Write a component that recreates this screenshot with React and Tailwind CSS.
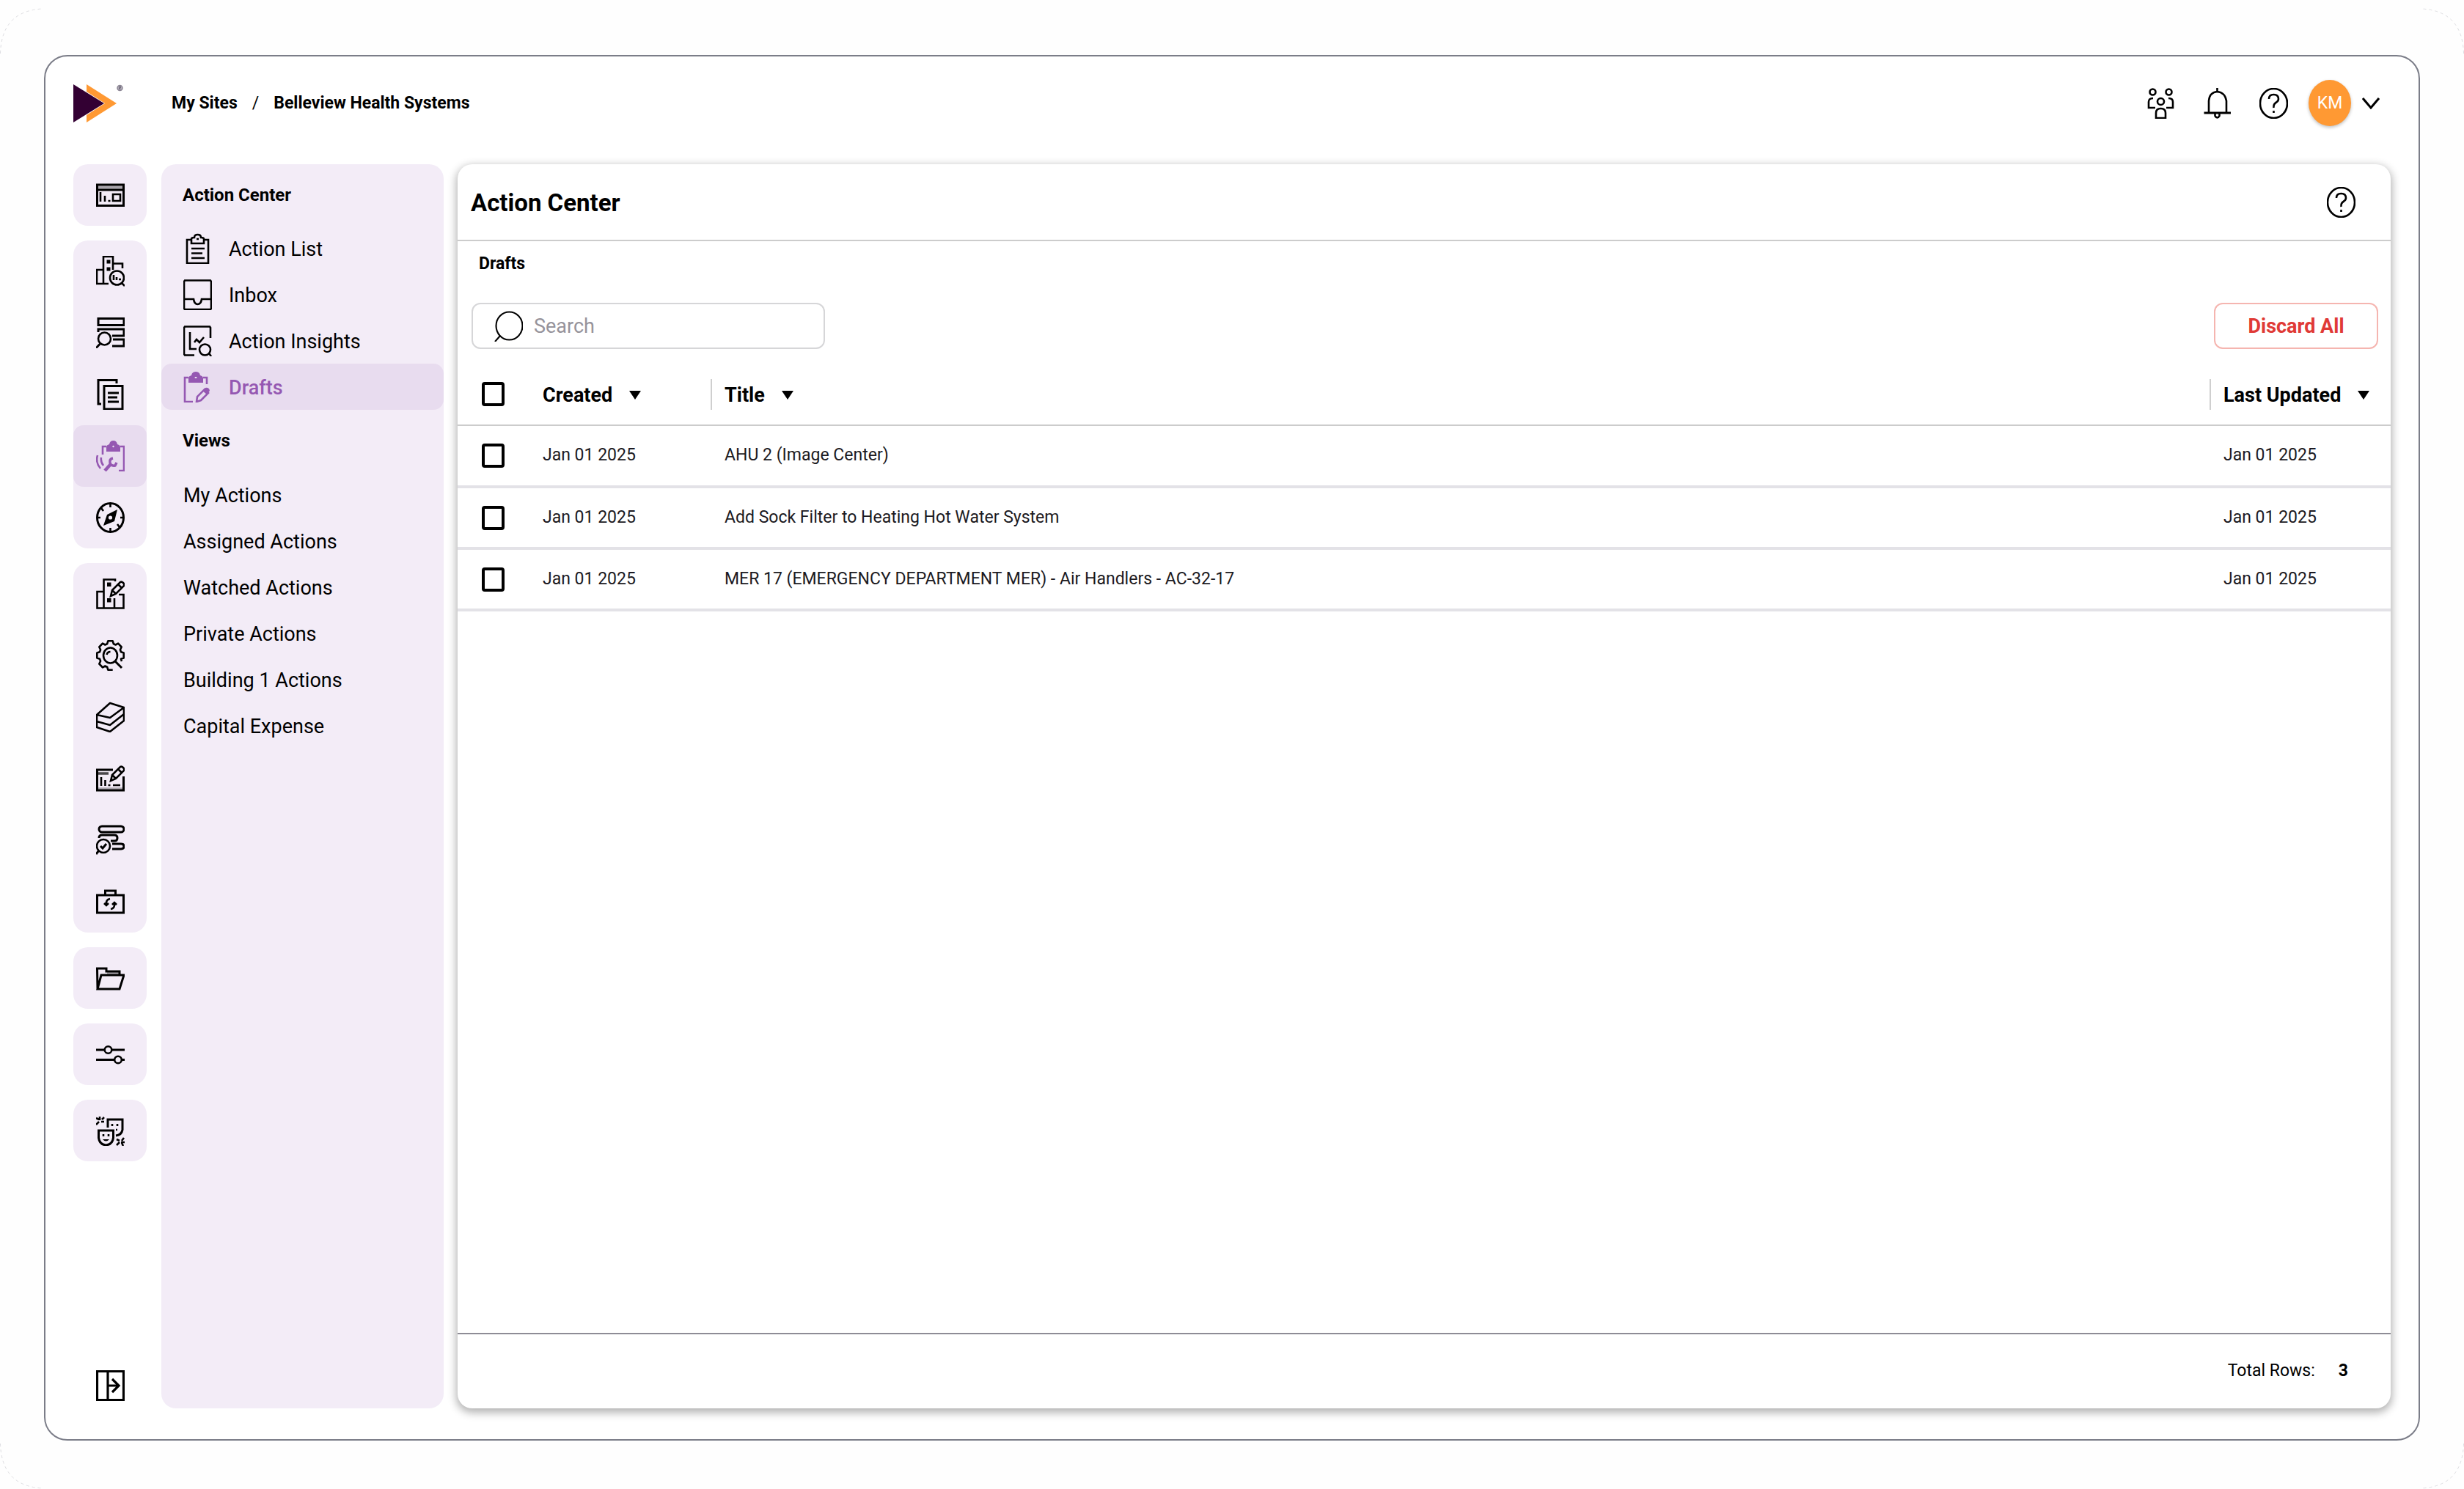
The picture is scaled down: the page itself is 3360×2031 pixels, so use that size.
import { useState } from "react";

// 8 lobed gear, left open where the magnifier handle leaves it
const gearPath = (() => {
  const pts = [];
  for (let i = 0; i < 8; i++) {
    const a = i * 45 + 90;
    [[-17, 0.82], [-10, 1], [10, 1], [17, 0.82]].forEach(([d, r]) => {
      const rad = ((a + d) * Math.PI) / 180;
      pts.push(`${(19.5 + 18.5 * r * Math.cos(rad)).toFixed(1)} ${(21 + 20 * r * Math.sin(rad)).toFixed(1)}`);
    });
  }
  // drop the lobe at the lower right
  return `M${pts.slice(1, 28).join("L")}L35 29`;
})();

const Icon = ({ children, bold }) => (
  <svg
    viewBox="0 0 39 42"
    className="w-[39px] h-[42px] shrink-0"
    fill="none"
    stroke="currentColor"
    strokeWidth={bold ? 2.6 : 2.1}
    aria-hidden="true"
  >
    {children}
  </svg>
);

const Pencil = () => (
  <path d="M20 24l2-8L33 5q2-1 4 1t1 4L27 21zM30 8l5 5M22 16l5 5" />
);

const icons = {
  dashboard: (
    <>
      <path d="M1.500 7h36v28.500h-36zM1 14h37" strokeWidth="3" />
      <path d="M2 10.5h35" strokeWidth="4" opacity=".3" />
      <path d="M6 17v13M12 22v8M16.500 29h3M23 20h10v9H23z" />
    </>
  ),
  buildingSearch: (
    <>
      <path d="M10 38V1h13v18M10 19H1v19h16M23 10.500h13V17" />
      <path d="M14.500 5.500h5v5h-5zM14.500 15.500h5v5h-5z" fill="currentColor" stroke="none" />
      <circle cx="28.500" cy="30" r="9.500" />
      <path d="M35 37l4 4M24 26v7M28 29v4M31 32h3" />
    </>
  ),
  tableSearch: (
    <>
      <path d="M3 1.500h35v9H3zM3 20v-4h35v9H22M23 30h15v9H22" strokeWidth="3" />
      <circle cx="11.500" cy="29" r="8.500" />
      <path d="M5.500 36L0 41.500" strokeWidth="3" />
    </>
  ),
  docs: (
    <path d="M28 6V1.500H3V34h4M11 9.500h25V41H11zM16 19h15M16 25h13M16 31h15" strokeWidth="3" />
  ),
  clipboardWrench: (
    <>
      <path d="M14 8H9v11M33 8h5v33h-7" />
      <path d="M14 15V9q0-3 4-4 1-5 5.500-5T29 5q4 1 4 4v6z" fill="currentColor" stroke="none" />
      <circle cx="23.500" cy="8" r="1.200" fill="#e8dcef" stroke="none" />
      <path d="M12 41l8-9" strokeWidth="4.500" />
      <path d="M23 24q-5 1-4 6t7 4l2-4" strokeWidth="3.500" />
      <path d="M2 20q-3 10 4 18M7 23q-1 6 3 11" />
    </>
  ),
  compass: (
    <>
      <ellipse cx="19.500" cy="21" rx="18" ry="19.500" strokeWidth="3" />
      <path d="M19.500 1v6M19.500 35v6M1 21h5M33 21h5M7 8l3 4M32 34l-3-4" />
      <path d="M29 10l-4 16L10 32l5-15z" fill="currentColor" stroke="none" />
      <circle cx="19.500" cy="21" r="2.600" fill="#f3ecf7" stroke="none" />
    </>
  ),
  buildingEdit: (
    <>
      <path d="M10.500 41V1.500H26V4M10.500 18H1.500v22.500h36V22H31M25 27v14" />
      <path d="M15 5.500h5.500V11H15zM15 27h5.500v5.500H15z" fill="currentColor" stroke="none" />
      <Pencil />
    </>
  ),
  gearSearch: (
    <>
      <path d={gearPath} strokeLinejoin="round" />
      <ellipse cx="19.500" cy="21" rx="9.500" ry="10.500" />
      <path d="M26 29l9 9" strokeWidth="3" />
      <path d="M14.500 20q1-4 5-4" />
    </>
  ),
  layers: (
    <path d="M19 2l19 6-19 14L1 18zM1 18v17l18 6 19-15V8M1 27l18 5 19-15" strokeLinejoin="round" />
  ),
  dashboardEdit: (
    <>
      <path d="M23 9H1.500v28h36V18" strokeWidth="3" />
      <path d="M2 14h15" strokeWidth="3.500" opacity=".7" />
      <path d="M2 34.500h35" opacity=".3" />
      <path d="M7 19v12M12.500 23v8M16.500 30h3M23 30h10" />
      <Pencil />
    </>
  ),
  gantt: (
    <>
      <rect x="4" y="2" width="34" height="8" rx="4" strokeWidth="3" />
      <path d="M4 18q0-4 4-4h17q4 0 4 4t-4 4h-5M22 26h12q4 0 4 3.500T34 33H22" strokeWidth="3" />
      <circle cx="10" cy="29" r="9" />
      <path d="M4 35l-4 5M6 29l3 3 5-6" strokeWidth="3" />
    </>
  ),
  briefcase: (
    <>
      <path d="M1.500 12h36v24h-36zM12.500 12V6h14v6" strokeWidth="3" />
      <path d="M19 17q-6 1-5 8M11 23l3 3 3-3M20 31q6-1 5-8M22 25l3-3 3 3" />
    </>
  ),
  folder: (
    <>
      <path d="M15 14h17" strokeWidth="5" opacity=".3" />
      <path d="M2 36L1.500 8H14v4h18v5M2 36l5-19h31l-6 19z" strokeWidth="3" />
    </>
  ),
  sliders: (
    <>
      <path d="M0 15h11M22 15h17M0 28.500h25M35 28.500h4" strokeWidth="3" />
      <circle cx="16.500" cy="15" r="4.800" />
      <circle cx="30" cy="28.500" r="4.800" />
    </>
  ),
  masks: (
    <>
      <path d="M16 17V6h20v14q-1 7-9 8M3.500 21h20v10q-1 9-10 10-9-1-10-10z" strokeWidth="3" />
      <path d="M10 26v3M17 26v3M22 12v3M29 12v3M27 20h2" />
      <path d="M9 33q4.500 5 9 0z" fill="currentColor" stroke="none" />
      <path d="M0 4l4 2M5 7V2M8 6l3-3M7 9h4M4 9l-4 4M28 33l4 2M35 35l3-4M34 37h5M32 37l-4 4M35 38l2 4" />
    </>
  ),
  expand: (
    <path d="M1.500 1.500h36v39h-36zM16 1v40M16 21h14M22 12l9 9-9 9" strokeWidth="3.200" />
  ),
  clipboard: (
    <>
      <path d="M10 9H5v32h29V9h-5" />
      <path d="M11 14V8q0-2 4-2 0-4 4.500-4T24 6q4 0 4 2v6zM18 8h3M11 21h18M11 27.500h15M11 34h18" />
    </>
  ),
  inbox: (
    <path d="M2 1.500h35l1 1.500v37l-1 1H2l-1-1V3zM1 27h13q1 7 5.500 7T25 27h13" />
  ),
  insights: (
    <>
      <path d="M37 17V3l-1-1.500H2L1 3v36l1 1.500h13" />
      <path d="M9 9v23h9M15 23l3-4 4 4 6-7" />
      <circle cx="29.500" cy="33" r="7.500" />
      <path d="M35 38l3 4" />
    </>
  ),
  drafts: (
    <>
      <path d="M7 8H2v33h11M27 8h5v9" />
      <path d="M7 15V9q0-3 4-4 1-5 6-5t6 5q4 1 4 4v6z" fill="currentColor" stroke="none" />
      <path d="M17 7v2" stroke="#e8dcef" />
      <path d="M18 41l1-7 10-10 5 5-10 10z" />
      <path d="M26 26l4-4q5-1 6 4l-4 5z" fill="currentColor" stroke="none" />
    </>
  ),
  people: (
    <>
      <circle cx="8.500" cy="5.500" r="4" />
      <circle cx="30.500" cy="5.500" r="4" />
      <circle cx="19.500" cy="18.500" r="4.500" />
      <path d="M9 14q-6 0-6 5v8h9M30 14q6 0 6 5v8h-9M13 41v-7q0-6 6.500-6t6.500 6v7z" />
    </>
  ),
  bell: (
    <>
      <path d="M19.500 0v5M8 33V17.500Q9 6 19.500 5 30 6 32 17.500V33" />
      <path d="M1.500 34H38" strokeWidth="3" />
      <path d="M16.500 35v3q3 5 6 0v-3" />
    </>
  ),
  help: (
    <>
      <ellipse cx="19.500" cy="21" rx="18.500" ry="20" />
      <path d="M13 15q0-6 6.500-6t6.500 6q0 3-3.500 5t-3 7M19.500 31v3" />
    </>
  ),
  search: (
    <>
      <ellipse cx="20.500" cy="20.500" rx="18" ry="19" />
      <path d="M8 34l-7 8" />
    </>
  ),
};

const railGroups = [
  [["dashboard", "Dashboard"]],
  [
    ["buildingSearch", "Site Overview"],
    ["tableSearch", "Table Explorer"],
    ["docs", "Reports"],
    ["clipboardWrench", "Action Center"],
    ["compass", "Navigator"],
  ],
  [
    ["buildingEdit", "Edit Site"],
    ["gearSearch", "Diagnostics"],
    ["layers", "Layers"],
    ["dashboardEdit", "Edit Dashboard"],
    ["gantt", "Schedules"],
    ["briefcase", "Service"],
  ],
  [["folder", "Files"]],
  [["sliders", "Settings"]],
  [["masks", "Impersonate"]],
];

const menu = [
  ["clipboard", "Action List"],
  ["inbox", "Inbox"],
  ["insights", "Action Insights"],
  ["drafts", "Drafts"],
];

const views = [
  "My Actions",
  "Assigned Actions",
  "Watched Actions",
  "Private Actions",
  "Building 1 Actions",
  "Capital Expense",
];

const rows = [
  { id: 1, created: "Jan 01 2025", title: "AHU 2 (Image Center)", updated: "Jan 01 2025" },
  { id: 2, created: "Jan 01 2025", title: "Add Sock Filter to Heating Hot Water System", updated: "Jan 01 2025" },
  { id: 3, created: "Jan 01 2025", title: "MER 17 (EMERGENCY DEPARTMENT MER) - Air Handlers - AC-32-17", updated: "Jan 01 2025" },
];

const Checkbox = (props) => (
  <input
    type="checkbox"
    className="block appearance-none w-[31px] h-[33px] border-4 border-black rounded-[4px] bg-white checked:bg-black"
    {...props}
  />
);

const SortHeader = ({ label, divider }) => (
  <th scope="col" className="p-0 text-left">
    <div className={`h-[42px] flex items-center ${divider ? "border-l-2 border-[#cfcfcf] pl-[17px]" : ""}`}>
      <button type="button" className="pt-0.5 flex items-center gap-[23px] text-[27px] leading-[40px] font-bold whitespace-nowrap">
        {label}
        <svg viewBox="0 0 16 12" className="w-4 h-3" aria-hidden="true">
          <path d="M0 0h16L8 12z" fill="currentColor" />
        </svg>
      </button>
    </div>
  </th>
);

function Logo() {
  return (
    <svg viewBox="0 0 70 52" className="w-[70px] h-[52px]" role="img" aria-label="Logo">
      <path d="M0 0l42 26L0 52z" fill="#330033" />
      <path d="M18 0l41 26-41 26V42l25-16L18 10z" fill="#ff9933" />
      <circle cx="63.500" cy="5" r="3.500" fill="#b5b0bb" stroke="#8b8594" strokeWidth="1.500" />
      <path d="M62.500 7V3h2v2h-2l2 2" fill="none" stroke="#6f6878" />
    </svg>
  );
}

function Header() {
  return (
    <header className="flex items-center pt-8 pl-[38px] pr-[53px]">
      <Logo />
      <nav aria-label="Breadcrumb" className="ml-[64px] flex items-center text-[23px] leading-[30px] font-bold">
        <a href="#sites">My Sites</a>
        <span className="mx-5 font-normal">/</span>
        <a href="#site">Belleview Health Systems</a>
      </nav>
      <div className="ml-auto flex items-center gap-[38px]">
        <button type="button" aria-label="Team"><Icon bold>{icons.people}</Icon></button>
        <button type="button" aria-label="Notifications"><Icon bold>{icons.bell}</Icon></button>
        <button type="button" aria-label="Help"><Icon bold>{icons.help}</Icon></button>
      </div>
      <button type="button" aria-label="Account" className="ml-7 flex items-center gap-[15px]">
        <span className="w-[58px] h-[63px] rounded-[50%] bg-[#ff9933] text-white text-[23px] leading-[30px] flex items-center justify-center shadow-[0_2px_4px_rgba(0,0,0,0.25)]">
          KM
        </span>
        <svg viewBox="0 0 24 16" className="w-6 h-4" fill="none" stroke="currentColor" strokeWidth="3" aria-hidden="true">
          <path d="M1 1l11 13L23 1" />
        </svg>
      </button>
    </header>
  );
}

function Rail() {
  return (
    <nav aria-label="Main" className="w-[100px] shrink-0 flex flex-col gap-5">
      {railGroups.map((group, i) => (
        <div key={i} className="rounded-[20px] bg-[#f3ecf7] overflow-hidden">
          {group.map(([icon, label]) => (
            <a
              key={icon}
              href={`#${icon}`}
              aria-label={label}
              className={`h-[84px] flex items-center justify-center ${icon === "clipboardWrench" ? "rounded-[14px] bg-[#e8dcef] text-[#9558b2]" : ""}`}
            >
              <Icon bold>{icons[icon]}</Icon>
            </a>
          ))}
        </div>
      ))}
      <button type="button" aria-label="Expand menu" className="mt-auto h-[63px] flex items-center justify-center">
        <Icon bold>{icons.expand}</Icon>
      </button>
    </nav>
  );
}

function SideMenu() {
  return (
    <aside className="ml-5 w-[385px] shrink-0 rounded-[20px] bg-[#f3ecf7] text-[27px]">
      <h2 className="h-[83px] pl-[29px] flex items-center text-[24px] font-bold">Action Center</h2>
      <ul>
        {menu.map(([icon, label]) => (
          <li key={label}>
            <a
              href={`#${icon}`}
              className={`h-[63px] pl-[30px] flex items-center gap-[23px] ${icon === "drafts" ? "rounded-[14px] bg-[#e8dcef] text-[#9558b2] font-medium" : ""}`}
            >
              <Icon bold>{icons[icon]}</Icon>
              <span className="pt-1">{label}</span>
            </a>
          </li>
        ))}
      </ul>
      <h2 className="h-[84px] pl-[29px] flex items-center text-[24px] font-bold">Views</h2>
      <ul>
        {views.map((view) => (
          <li key={view}>
            <a href="#view" className="h-[63px] pl-[30px] pt-1 flex items-center">{view}</a>
          </li>
        ))}
      </ul>
    </aside>
  );
}

function Drafts() {
  const [search, setSearch] = useState("");
  const [selected, setSelected] = useState([]);

  const visible = rows.filter((r) => r.title.toLowerCase().includes(search.toLowerCase()));

  const toggle = (id) =>
    setSelected((prev) => (prev.includes(id) ? prev.filter((x) => x !== id) : [...prev, id]));

  return (
    <main className="ml-[19px] flex-1 min-w-0 flex flex-col rounded-[20px] bg-white shadow-[0_4px_12px_2px_rgba(0,0,0,0.3)]">
      <div className="h-[105px] pl-[18px] pr-[48px] flex items-center justify-between border-b-2 border-[#cccccc]">
        <h1 className="pt-0.5 text-[33px] font-bold">Action Center</h1>
        <button type="button" aria-label="Help"><Icon bold>{icons.help}</Icon></button>
      </div>

      <h2 className="h-[62px] pl-[29px] flex items-center text-[23px] font-bold">Drafts</h2>

      <div className="mt-[22px] mb-5 pl-[19px] pr-[17px] flex items-center justify-between">
        <label className="w-[482px] h-[63px] pl-[29px] flex items-center gap-[15px] border-2 border-[#d6d6d8] rounded-[12px]">
          <Icon>{icons.search}</Icon>
          <input
            type="text"
            aria-label="Search"
            value={search}
            onChange={(e) => setSearch(e.target.value)}
            placeholder="Search"
            className="flex-1 min-w-0 text-[27px] leading-[42px] outline-none placeholder:text-[#96939b]"
          />
        </label>
        <button
          type="button"
          onClick={() => setSelected([])}
          className="w-[224px] h-[63px] pt-0.5 border-2 border-[#f5b5b0] rounded-[12px] text-[#e03a36] text-[27px] font-bold"
        >
          Discard All
        </button>
      </div>

      <table className="w-full table-fixed">
        <colgroup>
          <col className="w-[116px]" />
          <col className="w-[229px]" />
          <col />
          <col className="w-[247px]" />
        </colgroup>
        <thead>
          <tr className="h-[84px] border-b-2 border-[#cccccc]">
            <th scope="col" className="p-0 pl-[33px]">
              <Checkbox
                aria-label="Select all"
                checked={selected.length === rows.length}
                onChange={(e) => setSelected(e.target.checked ? rows.map((r) => r.id) : [])}
              />
            </th>
            <SortHeader label="Created" />
            <SortHeader label="Title" divider />
            <SortHeader label="Last Updated" divider />
          </tr>
        </thead>
        <tbody className="text-[23px] text-[#1c1a22]">
          {visible.map((row) => (
            <tr key={row.id} className="h-[84px] border-b-4 border-[#e3e2e7]">
              <td className="p-0 pl-[33px]">
                <Checkbox
                  aria-label={`Select ${row.title}`}
                  checked={selected.includes(row.id)}
                  onChange={() => toggle(row.id)}
                />
              </td>
              <td className="p-0">{row.created}</td>
              <td className="p-0 pl-[19px]">{row.title}</td>
              <td className="p-0 pl-[19px]">{row.updated}</td>
            </tr>
          ))}
        </tbody>
      </table>

      <footer className="mt-auto h-[103px] pr-[58px] flex items-center justify-end gap-8 border-t-2 border-[#8e8c96] text-[23px]">
        <span>Total Rows:</span>
        <span className="font-bold">{visible.length}</span>
      </footer>
    </main>
  );
}

export default function App() {
  return (
    <div className="relative min-h-screen flex flex-col px-[60px] pt-[75px] pb-[66px] bg-[#fefefe] text-black font-['Roboto',sans-serif]">
      {/* faint rounded outline, only visible at the page corners */}
      <svg className="absolute left-0 top-[11px] w-[60px] h-[62px]" viewBox="0 0 60 62" fill="none" stroke="#dedee2" strokeDasharray="4 4" aria-hidden="true">
        <path d="M.5 62Q2 4 58 1" />
      </svg>
      <svg className="absolute right-0 top-[11px] w-[60px] h-[62px] -scale-x-100" viewBox="0 0 60 62" fill="none" stroke="#dedee2" strokeDasharray="4 4" aria-hidden="true">
        <path d="M.5 62Q2 4 58 1" />
      </svg>
      <svg className="absolute left-0 bottom-0 w-[60px] h-[62px] -scale-y-100" viewBox="0 0 60 62" fill="none" stroke="#dedee2" strokeDasharray="4 4" aria-hidden="true">
        <path d="M.5 62Q2 4 58 1" />
      </svg>
      <svg className="absolute right-0 bottom-0 w-[60px] h-[62px] -scale-100" viewBox="0 0 60 62" fill="none" stroke="#dedee2" strokeDasharray="4 4" aria-hidden="true">
        <path d="M.5 62Q2 4 58 1" />
      </svg>

      <div className="flex-1 flex flex-col border-2 border-[#7b7d88] rounded-[32px] bg-white">
        <Header />
        <div className="flex-1 flex mt-[52px] mb-[42px] px-[38px]">
          <Rail />
          <SideMenu />
          <Drafts />
        </div>
      </div>
    </div>
  );
}
